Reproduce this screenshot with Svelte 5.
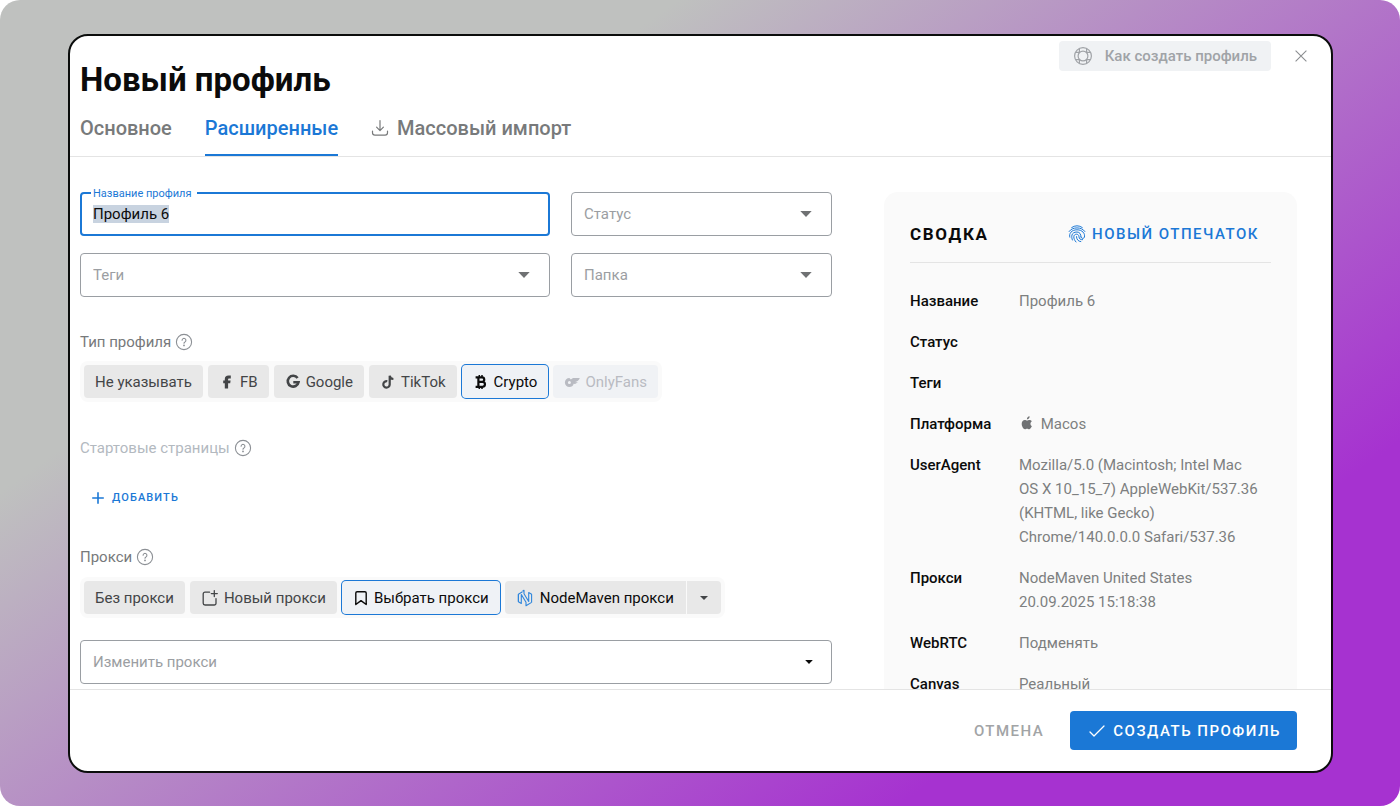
<script>
  import { onMount } from 'svelte';

  let name = $state('Профиль 6');
  let type = $state('crypto');
  let proxy = $state('select');
  let nameInput;

  onMount(() => {
    nameInput.focus({ preventScroll: true });
    nameInput.select();
  });

  const types = [
    { id: 'none', label: 'Не указывать' },
    { id: 'fb', label: 'FB' },
    { id: 'google', label: 'Google' },
    { id: 'tiktok', label: 'TikTok' },
    { id: 'crypto', label: 'Crypto' },
    { id: 'onlyfans', label: 'OnlyFans', disabled: true }
  ];

  const proxies = [
    { id: 'off', label: 'Без прокси' },
    { id: 'new', label: 'Новый прокси' },
    { id: 'select', label: 'Выбрать прокси' }
  ];

  const summary = $derived([
    ['Название', name],
    ['Статус', ''],
    ['Теги', ''],
    ['Платформа', 'Macos'],
    ['UserAgent', 'Mozilla/5.0 (Macintosh; Intel Mac OS X 10_15_7) AppleWebKit/537.36 (KHTML, like Gecko) Chrome/140.0.0.0 Safari/537.36'],
    ['Прокси', 'NodeMaven United States 20.09.2025 15:18:38'],
    ['WebRTC', 'Подменять'],
    ['Canvas', 'Реальный']
  ]);
</script>

{#snippet help()}
  <svg class="help" width="18" height="18" viewBox="0 0 18 18" fill="none" stroke="currentColor" stroke-width="1.1" stroke-linecap="round" aria-hidden="true">
    <circle cx="9" cy="9" r="7.6" />
    <path d="M7.1 7.3a1.9 1.9 0 1 1 2.9 1.6c-.7.4-1 .7-1 1.4" />
    <circle cx="9" cy="12.4" r=".35" fill="currentColor" />
  </svg>
{/snippet}

{#snippet select(id, label, dark)}
  <div class="select">
    <select {id} aria-label={label} class:dark>
      <option>{label}</option>
    </select>
    <svg width={dark ? 8 : 12} height={dark ? 4 : 6} viewBox="0 0 12 6" preserveAspectRatio="none" class:dark aria-hidden="true"><path d="M.3 0h11.4L6 6z" fill="currentColor" /></svg>
  </div>
{/snippet}

{#snippet icon(id)}
  {#if id === 'fb'}
    <svg width="16" height="16" viewBox="0 0 16 16" aria-hidden="true"><path fill="currentColor" d="M5.8 14.6V9.3H4.2V6.5h1.6V5c0-2.300 1.300-3.500 3.700-3.500h2.300v2.900h-1.500c-.9 0-1.200.3-1.200 1v1.100h2.500l-.4 2.800H9.100v5.300z" /></svg>
  {:else if id === 'google'}
    <svg width="16" height="16" viewBox="0 0 16 16" fill="none" stroke="currentColor" stroke-width="2.6" aria-hidden="true"><path d="M12.6 4.1A5.4 5.4 0 1 0 13.5 8.2H8.3" /></svg>
  {:else if id === 'tiktok'}
    <svg width="16" height="16" viewBox="0 0 16 16" fill="none" stroke="currentColor" stroke-width="2.2" aria-hidden="true"><path d="M7.3 7.3a3.2 3.2 0 1 0 2.4 3.1V1.7c.2 2 1.5 3.2 3.7 3.3" /></svg>
  {:else if id === 'crypto'}
    <svg width="16" height="16" viewBox="0 0 16 16" fill="none" stroke="currentColor" aria-hidden="true">
      <path stroke-width="2.2" d="M2.6 3.4H9a2.2 2.2 0 0 1 0 4.5H5.6 9.5a2.4 2.4 0 0 1 0 4.9H2.6M5.4 3.4v9.4" />
      <path stroke-width="1.5" d="M6.3 1v2M9 1v2M6.3 13v2.1M9 13v2.1" />
    </svg>
  {:else if id === 'onlyfans'}
    <svg width="16" height="16" viewBox="0 0 16 16" aria-hidden="true">
      <path fill="currentColor" fill-rule="evenodd" d="M5.4 4A4.5 4.5 0 1 0 5.4 13 4.5 4.5 0 0 0 9.7 9.8c1.6.3 3.2-.2 4-1.7-.9.2-1.9 0-2.5-.2 2-.3 3.9-1.7 4.6-4H10C8.7 3.9 7.6 4.5 6.9 5.4zM5.4 7a1.5 1.5 0 1 1 0 3 1.5 1.5 0 0 1 0-3z" />
    </svg>
  {:else if id === 'new'}
    <svg width="18" height="18" viewBox="0 0 18 18" fill="none" stroke="currentColor" stroke-width="1.3" stroke-linecap="round" stroke-linejoin="round" aria-hidden="true">
      <path d="M8.6 3.2H4A1.8 1.8 0 0 0 2.2 5v9.2A1.8 1.8 0 0 0 4 16h9.2a1.8 1.8 0 0 0 1.8-1.8V9.6M13.3 1.6v6M10.3 4.6h6" />
    </svg>
  {:else if id === 'select'}
    <svg width="16" height="18" viewBox="0 0 16 18" fill="none" stroke="currentColor" stroke-width="1.4" stroke-linejoin="round" aria-hidden="true">
      <path d="M2.8 4.1A1.3 1.3 0 0 1 4.1 2.8h7.8a1.3 1.3 0 0 1 1.3 1.3v11.4L8 11.6l-5.2 3.9z" />
    </svg>
  {/if}
{/snippet}

<div class="stage">
  <section class="dialog" role="dialog" aria-labelledby="dialog-title">
    <header>
      <h1 id="dialog-title">Новый профиль</h1>
      <div class="tools">
        <button class="howto">
          <svg width="20" height="20" viewBox="0 0 20 20" fill="none" stroke="currentColor" stroke-width="1.2" aria-hidden="true">
            <circle cx="10" cy="10" r="8.4" />
            <circle cx="10" cy="10" r="4.9" />
            <path d="M6.400 2.500v3.900H2.500M13.600 2.500v3.900h3.900M6.400 17.500v-3.900H2.500M13.600 17.500v-3.900h3.900" />
          </svg>
          Как создать профиль
        </button>
        <button class="close" aria-label="Закрыть">
          <svg width="12" height="12" viewBox="0 0 12 12" fill="none" stroke="currentColor" stroke-width="1.1" aria-hidden="true"><path d="M.6.6l10.8 10.8M11.4.6L.6 11.4" /></svg>
        </button>
      </div>
    </header>

    <nav>
      <button>Основное</button>
      <button class="current">Расширенные</button>
      <button class="import">
        <svg width="18" height="18" viewBox="0 0 18 18" fill="none" stroke="currentColor" stroke-width="1.2" stroke-linecap="round" stroke-linejoin="round" aria-hidden="true"><path d="M9 1.5v10M5.6 8.2L9 11.6l3.4-3.4M1.5 12v1.8a2.4 2.4 0 0 0 2.4 2.4h10.2a2.4 2.4 0 0 0 2.4-2.4V12" /></svg>
        Массовый импорт
      </button>
    </nav>

    <div class="body">
      <form>
        <div class="fields">
          <div class="text-field">
            <label for="profile-name">Название профиля</label>
            <input id="profile-name" type="text" autocomplete="off" spellcheck="false" bind:value={name} bind:this={nameInput} />
          </div>
          {@render select('status', 'Статус', false)}
          {@render select('tags', 'Теги', false)}
          {@render select('folder', 'Папка', false)}
        </div>

        <p class="caption type-caption">Тип профиля {@render help()}</p>
        <div class="group" role="group" aria-label="Тип профиля">
          {#each types as t (t.id)}
            <button type="button" class:active={type === t.id} disabled={t.disabled} onclick={() => (type = t.id)}>
              {@render icon(t.id)}{t.label}
            </button>
          {/each}
        </div>

        <p class="caption start-caption muted">Стартовые страницы {@render help()}</p>
        <button type="button" class="add">
          <svg width="12" height="12" viewBox="0 0 12 12" stroke="currentColor" stroke-width="1.6" aria-hidden="true"><path d="M6 .2v11.6M.2 6h11.6" /></svg>
          Добавить
        </button>

        <p class="caption proxy-caption">Прокси {@render help()}</p>
        <div class="group" role="group" aria-label="Прокси">
          {#each proxies as p (p.id)}
            <button type="button" class:active={proxy === p.id} onclick={() => (proxy = p.id)}>
              {@render icon(p.id)}{p.label}
            </button>
          {/each}
          <div class="split">
            <button type="button" class="maven">
              <svg width="16" height="18" viewBox="0 0 16 18" fill="none" stroke="#2f86dc" stroke-width="1.1" stroke-linejoin="round" aria-hidden="true">
                <path d="M5.500 2.800L1.400 5.200v7.600L4.300 14.500V5.500L9 13.200v3.600l5.600-3.400M10.500 15.200" />
                <path d="M1.400 12.800V5.200M14.600 13.400V5.200L11.700 3.500v9L7 4.800V1.200L5.500 2.100" />
              </svg>
              NodeMaven прокси
            </button>
            <button type="button" class="more" aria-label="Другие прокси">
              <svg width="8" height="4" viewBox="0 0 8 4" aria-hidden="true"><path d="M0 0h8L4 4z" fill="currentColor" /></svg>
            </button>
          </div>
        </div>
        <div class="change">{@render select('proxy', 'Изменить прокси', true)}</div>
      </form>

      <aside>
        <div class="aside-head">
          <h2>Сводка</h2>
          <button>
            <svg width="18" height="18" viewBox="0 0 18 18" fill="none" stroke="currentColor" stroke-width="1" stroke-linecap="round" aria-hidden="true">
              <path d="M3.700 2.500a9.400 9.400 0 0 1 10.600 0M1.100 6.500c3.200-4.900 12.600-4.900 15.800 0" />
              <path d="M1.800 12.200C.7 8.500 3.600 4.800 9 4.800s8.300 3.700 7.400 7.400c-.5 1.800-3.200 1.600-3.400-.2" />
              <path d="M4.400 15c-1.300-3-1.300-8 4.600-8 2.700 0 4 2.200 4 5" />
              <path d="M8 17c-1.500-1.700-2.200-3.400-2.200-5.200 0-3.300 5.200-3.600 5.200 0 0 2 1.500 3.100 3.600 2.900" />
              <path d="M8.500 11.600c0 2.800 1.600 4.800 4.300 5" />
            </svg>
            Новый отпечаток
          </button>
        </div>
        <dl>
          {#each summary as [term, value] (term)}
            <dt>{term}</dt>
            <dd>
              {#if term === 'Платформа'}
                <svg class="apple" width="16" height="16" viewBox="0 0 16 16" aria-hidden="true">
                  <path fill="currentColor" d="M12.9 11.1c-.5 1.3-1.6 3.2-2.8 3.2-.8 0-1.1-.5-2-.5-1 0-1.3.5-2.1.5-1.6 0-3.3-3-3.3-5.5 0-2.3 1.5-3.8 3.1-3.8.9 0 1.6.6 2.3.6.6 0 1.4-.6 2.5-.6.8 0 1.7.4 2.3 1.2-2 1.2-1.8 4.1 0 4.900z" />
                  <path fill="currentColor" d="M10.6 1.3c.2 1.700-1.100 3.100-2.700 3.100-.1-1.600 1.200-2.900 2.700-3.100z" />
                </svg>
              {/if}
              {value}
            </dd>
          {/each}
        </dl>
      </aside>
    </div>

    <footer>
      <button class="cancel">Отмена</button>
      <button class="create">
        <svg width="16" height="12" viewBox="0 0 16 12" fill="none" stroke="currentColor" stroke-width="1.3" stroke-linecap="round" stroke-linejoin="round" aria-hidden="true"><path d="M1 7l4 4L15 1" /></svg>
        Создать профиль
      </button>
    </footer>
  </section>
</div>

<style>
  :global(body) {
    margin: 0;
    background: #fff;
  }

  .stage {
    box-sizing: border-box;
    height: 100vh;
    min-height: 480px;
    padding: 34px 67px 33px 68px;
    border-radius: 20px;
    background: linear-gradient(144deg, #bfc1bf 27%, #a632d0 80%);
    font-family: Roboto, 'Liberation Sans', sans-serif;
    font-size: 15px;
    line-height: 24px;
    color: #0b0b0b;
  }

  .dialog {
    box-sizing: border-box;
    display: flex;
    flex-direction: column;
    height: 100%;
    border: 2px solid #0b0d0c;
    border-radius: 20px;
    background: #fff;
    overflow: hidden;
  }

  button,
  input,
  select {
    font: inherit;
    color: inherit;
  }

  button {
    display: inline-flex;
    align-items: center;
    justify-content: center;
    margin: 0;
    padding: 0;
    border: 0;
    background: none;
    white-space: nowrap;
    cursor: pointer;
  }

  svg {
    flex: none;
  }

  header {
    display: flex;
    justify-content: space-between;
    align-items: flex-start;
    padding: 5px 24px 0 10px;
  }

  h1 {
    margin: 0;
    padding-top: 19px;
    font-size: 33px;
    font-weight: 700;
    line-height: 40px;
  }

  .tools {
    display: flex;
    align-items: center;
    gap: 24px;
  }

  .howto {
    gap: 12px;
    height: 30px;
    padding: 0 14px;
    border-radius: 4px;
    background: #f0f2f4;
    color: #a0a3a7;
    font-weight: 500;
  }

  .close {
    color: #8b8e91;
  }

  nav {
    display: flex;
    gap: 33px;
    height: 56px;
    padding: 0 10px;
    border-bottom: 1px solid #e4e4e4;
    color: #787a7b;
    font-size: 20px;
    font-weight: 500;
  }

  nav button {
    box-sizing: border-box;
    padding-top: 2px;
    border-bottom: 2px solid transparent;
  }

  nav .current {
    color: #1b78d6;
    border-bottom-color: #1b78d6;
  }

  nav .import {
    gap: 8px;
  }

  .body {
    flex: 1;
    min-height: 0;
    display: grid;
    grid-template-columns: minmax(0, 752fr) minmax(0, 413fr);
    column-gap: 52px;
    align-items: start;
    padding: 35px 34px 0 10px;
    overflow: hidden;
  }

  .fields {
    display: grid;
    grid-template-columns: 470fr 261fr;
    gap: 17px 21px;
  }

  .text-field {
    position: relative;
  }

  .text-field label {
    position: absolute;
    top: -5px;
    left: 11px;
    padding: 0 6px 0 2px;
    background: #fff;
    color: #1b78d6;
    font-size: 11px;
    line-height: 14px;
  }

  .text-field input {
    box-sizing: border-box;
    width: 100%;
    height: 44px;
    padding: 0 11px;
    border: 2px solid #1b78d6;
    border-radius: 4px;
    background: #fff;
    outline: none;
  }

  .text-field input::selection {
    background: #c8d3e0;
    color: #0b0b0b;
  }

  .select {
    display: grid;
    align-items: center;
  }

  .select > * {
    grid-area: 1 / 1;
  }

  .select select {
    box-sizing: border-box;
    width: 100%;
    height: 44px;
    padding: 0 40px 0 12px;
    border: 1px solid #9a9ea3;
    border-radius: 4px;
    background: #fff;
    color: #9b9ea2;
    appearance: none;
  }

  .select svg {
    justify-self: end;
    margin-right: 20px;
    color: #6f7173;
    pointer-events: none;
  }

  .select svg.dark {
    margin-right: 19px;
    color: #0b0b0b;
  }

  .caption {
    display: flex;
    align-items: center;
    gap: 4px;
    margin: 0;
    color: #77797b;
  }

  .caption.muted {
    color: #b3b9bf;
  }

  .help {
    color: #8c9095;
  }

  .type-caption {
    padding: 33px 0 7px;
  }

  .start-caption {
    padding: 34px 0 26px;
  }

  .proxy-caption {
    padding: 34px 0 8px;
  }

  .group {
    display: flex;
    gap: 5px;
    width: fit-content;
    padding: 4px;
    border-radius: 8px;
    background: #fafafa;
  }

  .group button {
    gap: 5px;
    height: 33px;
    padding: 0 11px;
    border-radius: 4px;
    background: #e8e8e8;
    color: #434547;
  }

  .group .active {
    background: #eff2f6;
    color: #0b0b0b;
    box-shadow: 0 0 0 1px #1b78d6;
  }

  .group button:disabled {
    background: #f0f2f5;
    color: #b9bbc2;
  }

  .split {
    display: flex;
    gap: 1px;
  }

  .group .maven {
    gap: 7px;
    padding: 0 12px;
    color: #0b0b0b;
    border-radius: 4px 0 0 4px;
  }

  .group .more {
    padding: 0 13px;
    border-radius: 0 4px 4px 0;
  }

  .add,
  h2,
  .aside-head button,
  footer button {
    letter-spacing: 0.1em;
    text-transform: uppercase;
  }

  .add {
    gap: 8px;
    padding: 0 12px;
    color: #1b78d6;
    font-size: 11px;
    font-weight: 500;
  }

  .change {
    padding-top: 22px;
  }

  aside {
    padding: 26px 26px 0;
    border-radius: 14px;
    background: #fafafa;
    height: 800px;
  }

  .aside-head {
    display: flex;
    align-items: center;
    justify-content: space-between;
    padding: 4px 12px 16px 0;
    border-bottom: 1px solid #e4e4e4;
  }

  h2 {
    margin: 0;
    font-size: 17px;
    font-weight: 700;
    line-height: 24px;
  }

  .aside-head button {
    gap: 6px;
    color: #1b78d6;
    font-weight: 500;
  }

  dl {
    display: grid;
    grid-template-columns: 109px minmax(0, 1fr);
    row-gap: 17px;
    margin: 26px 8px 0 0;
  }

  dt {
    font-weight: 500;
  }

  dd {
    margin: 0;
    color: #7d7f80;
  }

  .apple {
    margin-right: 2px;
    vertical-align: -2px;
    color: #6f7173;
  }

  footer {
    flex: none;
    display: flex;
    align-items: center;
    justify-content: flex-end;
    gap: 26px;
    height: 82px;
    box-sizing: border-box;
    padding: 0 34px;
    border-top: 1px solid #e4e4e4;
    font-weight: 500;
  }

  .cancel {
    color: #a2a4a6;
  }

  .create {
    gap: 8px;
    height: 39px;
    padding: 0 16px 0 19px;
    border-radius: 4px;
    background: #1b78d6;
    color: #fff;
  }
</style>
